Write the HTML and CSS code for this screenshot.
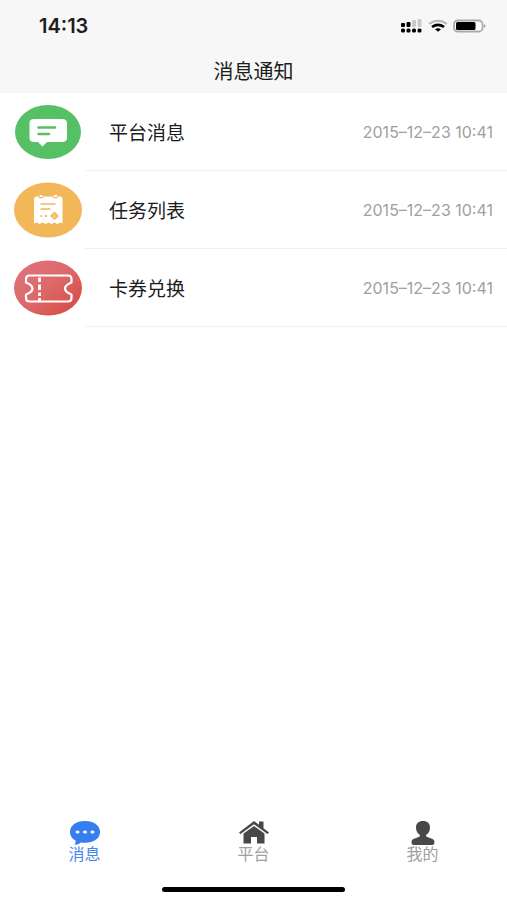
FILE: index.html
```html
<!DOCTYPE html>
<html lang="zh-CN">
<head>
    <meta charset="UTF-8">
    <meta name="viewport" content="width=device-width, initial-scale=1.0">
    <title>消息通知</title>
    <link rel="stylesheet" href="styles.css">
</head>
<body>
    <header class="header">
        <div class="status-bar">
            <span class="time">14:13</span>
            <div class="status-icons">
                <svg width="22" height="14" viewBox="0 0 22 14">
                    <g fill="#c9c9c9">
                        <rect x="11" y="1" width="4" height="7" rx="1"/>
                        <rect x="16.5" y="0" width="4" height="8" rx="1"/>
                    </g>
                    <g fill="#000">
                        <rect x="0" y="4" width="4" height="4" rx="1"/>
                        <rect x="5.5" y="3" width="4" height="5" rx="1"/>
                        <rect x="0" y="9.5" width="4" height="4" rx="1.5"/>
                        <rect x="5.5" y="9.5" width="4" height="4" rx="1.5"/>
                        <rect x="11" y="9.5" width="4" height="4" rx="1.5"/>
                        <rect x="16.5" y="9.5" width="4" height="4" rx="1.5"/>
                    </g>
                </svg>
                <svg width="20" height="14" viewBox="0 0 20 14" fill="none">
                    <path d="M1 5Q10 -1.500 19 5" stroke="#b5b5b5" stroke-width="2"/>
                    <path d="M4 8Q10 3.600 16 8" stroke="#000" stroke-width="2.6"/>
                    <path d="M7 10.300Q10 8 13 10.300L10 12.800Z" fill="#000"/>
                </svg>
                <svg width="34" height="14" viewBox="0 0 34 14">
                    <rect x="1" y="1.5" width="28.5" height="11" rx="3.5" fill="#fff" stroke="#aaa" stroke-width="1.8"/>
                    <rect x="3" y="3" width="19.5" height="8" rx="1.5" fill="#000"/>
                    <path d="M31 5Q34 7 31 9Z" fill="#999"/>
                </svg>
            </div>
        </div>
        <h1 class="title">消息通知</h1>
    </header>

    <main class="messages">
        <a class="message" href="#platform">
            <svg class="avatar" viewBox="0 0 68 56">
                <ellipse cx="34" cy="28" rx="33" ry="27" fill="#55c064"/>
                <path d="M20 15H48Q53 15 53 19V34Q53 38 48 38H33L28.5 42.5L24 38H20Q15.5 38 15.5 34V19Q15.5 15 20 15Z" fill="#fff"/>
                <path d="M24.5 23.5H41M24.5 30H35" stroke="#55c064" stroke-width="2.4" stroke-linecap="round"/>
            </svg>
            <div class="message-body">
                <span class="name">平台消息</span>
                <time class="date" datetime="2015-12-23T10:41">2015–12–23 10:41</time>
            </div>
        </a>
        <a class="message" href="#tasks">
            <svg class="avatar" viewBox="0 0 68 56">
                <ellipse cx="34" cy="28" rx="34" ry="27.5" fill="#f1b759"/>
                <path d="M22 14.5H24.5A2.5 2 0 0 0 29.5 14.5H39A2.5 2 0 0 0 44 14.5H46Q48.5 14.5 48.5 17V41.5L46 40.5L43.5 42L40.5 40.5L37.5 42L34.5 40.5L31.5 42L28.5 40.5L25.5 42L23 40.5L20 41.5V17Q20 14.5 22 14.5Z" fill="#fff"/>
                <path d="M25.5 14H28.5M40 14H43" stroke="#fff" stroke-width="2"/>
                <path d="M26.5 22H41.5M26.5 27H36.5" stroke="#f1b759" stroke-width="1.6"/>
                <path d="M26.5 34H28M31 34H33" stroke="#f1b759" stroke-width="1.8"/>
                <path d="M40.5 29.5L45 34L40.5 38L36 34Z" fill="#f1b759"/>
                <path d="M40.5 31.5V36.5M38 34H43" stroke="#fbe3b9" stroke-width="0.6"/>
            </svg>
            <div class="message-body">
                <span class="name">任务列表</span>
                <time class="date" datetime="2015-12-23T10:41">2015–12–23 10:41</time>
            </div>
        </a>
        <a class="message" href="#coupons">
            <svg class="avatar" viewBox="0 0 68 56">
                <defs>
                    <linearGradient id="red" x1="0" y1="0" x2="1" y2="1">
                        <stop offset="0" stop-color="#df7580"/>
                        <stop offset="0.5" stop-color="#dc6869"/>
                        <stop offset="1" stop-color="#d7453e"/>
                    </linearGradient>
                </defs>
                <ellipse cx="34" cy="28" rx="34" ry="27.5" fill="url(#red)"/>
                <path d="M15.5 15.5H54Q57.5 15.5 57.5 19V22.5Q51 25 51 28.500Q51 32 57.5 34.5V38Q57.5 41.5 54 41.5H15.5Q12 41.5 12 38V34.5Q18.5 32 18.5 28.500Q18.5 25 12 22.5V19Q12 15.5 15.5 15.5Z" fill="none" stroke="#fff" stroke-width="2.2" stroke-linejoin="round"/>
                <path d="M25.5 17.5V22M25.5 24.5V30M25.5 32.5V36M25.5 38V41" stroke="#fff" stroke-width="2.8"/>
            </svg>
            <div class="message-body">
                <span class="name">卡券兑换</span>
                <time class="date" datetime="2015-12-23T10:41">2015–12–23 10:41</time>
            </div>
        </a>
    </main>

    <footer class="footer">
        <nav class="tabs">
            <a class="tab active" href="#messages">
                <svg width="32" height="26" viewBox="0 0 32 26">
                    <path d="M16 1C7 1 1 5.5 1 12C1 16 3 18.8 6.5 20.5Q7 23 5.5 25Q9.5 24.5 12 22.4Q14 22.8 16 22.8C25 22.8 31 18.5 31 12S25 1 16 1Z" fill="#367ef0"/>
                    <g fill="#fff">
                        <ellipse cx="8.5" cy="12" rx="2" ry="1.5"/>
                        <ellipse cx="16" cy="12" rx="2" ry="1.5"/>
                        <ellipse cx="23.5" cy="12" rx="2" ry="1.5"/>
                    </g>
                </svg>
                <span>消息</span>
            </a>
            <a class="tab" href="#home">
                <svg width="32" height="26" viewBox="0 0 32 26" fill="#484848">
                    <path d="M1 12.500L16 1L21 4.800V1.500H25.5V8.300L31 12.500L29.500 14L16 4.300L2.500 14Z"/>
                    <path d="M5.5 13.500L16 6L26.5 13.500V23.5H19V17H13V23.5H5.5Z"/>
                </svg>
                <span>平台</span>
            </a>
            <a class="tab" href="#mine">
                <svg width="32" height="26" viewBox="0 0 32 26" fill="#484848">
                    <path d="M16 1C11.500 1 9 3.500 9 7.500C9 11 10.500 13.500 13 15V16Q12.500 17 9 18C5.500 19 4.500 20 4.500 23Q4.500 25 7 25H25Q27.500 25 27.500 23C27.500 20 26.500 19 23 18Q19.500 17 19 16V15C21.500 13.500 23 11 23 7.500C23 3.500 20.500 1 16 1Z"/>
                </svg>
                <span>我的</span>
            </a>
        </nav>
        <div class="home-indicator"></div>
    </footer>
</body>
</html>
```

FILE: styles.css
```css
* {
    box-sizing: border-box;
}
body {
    display: flex;
    flex-direction: column;
    min-height: 100vh;
    margin: 0;
    font-family: Inter, "Noto Sans CJK SC", sans-serif;
    color: #1c1c1c;
    background: #fff;
}
a {
    color: inherit;
    text-decoration: none;
}
svg {
    display: block;
    flex-shrink: 0;
}
.header {
    height: 93px;
    background: #f7f7f7;
}
.status-bar {
    display: flex;
    justify-content: space-between;
    align-items: center;
    height: 52px;
    padding: 0 20px 0 39px;
}
.time {
    font-size: 20px;
    font-weight: 600;
}
.status-icons {
    display: flex;
    gap: 5px;
}
.title {
    margin: 0;
    font-size: 20px;
    font-weight: 400;
    line-height: 40px;
    text-align: center;
}
.message {
    display: flex;
    align-items: center;
    height: 78px;
    padding-left: 14px;
}
.avatar {
    width: 68px;
    height: 56px;
}
.message-body {
    display: flex;
    flex: 1;
    justify-content: space-between;
    align-items: center;
    height: 100%;
    margin-left: 3px;
    padding: 0 14px 0 24px;
    border-bottom: 1px solid #f0f0f0;
}
.name {
    font-size: 19px;
}
.date {
    font-size: 16px;
    color: #a0a0a0;
}
.footer {
    margin-top: auto;
    padding-bottom: 8px;
}
.tabs {
    display: flex;
    margin-bottom: 24px;
}
.tab {
    display: flex;
    flex: 1;
    flex-direction: column;
    align-items: center;
    font-size: 16px;
    line-height: 17px;
    color: #a0a0a0;
}
.active {
    color: #4a86f0;
}
.home-indicator {
    width: 36%;
    height: 5px;
    margin: 0 auto;
    border-radius: 3px;
    background: #000;
}
```
